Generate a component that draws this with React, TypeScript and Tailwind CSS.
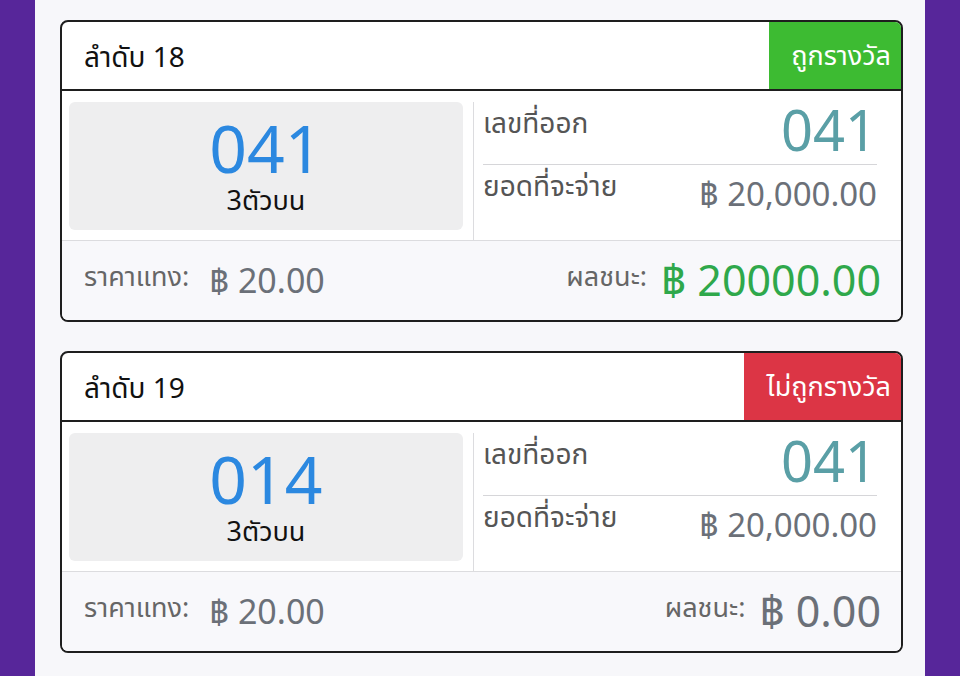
import React from "react";

type Ticket = {
  no: number;
  number: string;
  kind: string;
  drawn: string;
  payout: string;
  stake: string;
  result: string;
  won: boolean;
};

const tickets: Ticket[] = [
  { no: 18, number: "041", kind: "3ตัวบน", drawn: "041", payout: "฿ 20,000.00", stake: "฿ 20.00", result: "฿ 20000.00", won: true },
  { no: 19, number: "014", kind: "3ตัวบน", drawn: "041", payout: "฿ 20,000.00", stake: "฿ 20.00", result: "฿ 0.00", won: false },
];

function TicketCard({ t }: { t: Ticket }) {
  return (
    <div className="border-2 border-[#1e1e1e] rounded-[8px] overflow-hidden bg-white">
      {/* header */}
      <div className="flex items-stretch h-[69px] border-b-2 border-[#1e1e1e]">
        <div className="flex-1 flex items-center pl-[22px] text-[28px] text-[#111]">ลำดับ {t.no}</div>
        <div
          className={
            t.won
              ? "bg-[#3dbb32] text-white text-[27px] flex items-center justify-end pr-[10px] w-[132px]"
              : "bg-[#dc3545] text-white text-[27px] flex items-center justify-end pr-[10px] w-[157px]"
          }
        >
          {t.won ? "ถูกรางวัล" : "ไม่ถูกรางวัล"}
        </div>
      </div>

      {/* body */}
      <div className="flex h-[150px] border-b border-[#dcdcdf]">
        <div className="w-[411px] pt-[11px] pl-[7px] pr-[10px] pb-[10px]">
          <div className="h-full bg-[#eeeeef] rounded-[6px] flex flex-col items-center justify-center gap-[2px]">
            <div className="text-[66px] leading-[66px] text-[#2b88e0]">{t.number}</div>
            <div className="text-[27px] leading-[36px] text-[#111]">{t.kind}</div>
          </div>
        </div>
        <div className="w-px bg-[#dcdcdf] mt-[11px]" />
        <div className="flex-1 flex flex-col pl-[9px] pr-[24px]">
          <div className="h-[74px] flex justify-between items-start border-b border-[#d6d6d9]">
            <span className="text-[28px] leading-[36px] text-[#555] mt-[13px]">เลขที่ออก</span>
            <span className="text-[56px] leading-[56px] text-[#5a9fa6] mt-[10px]">{t.drawn}</span>
          </div>
          <div className="flex-1 flex justify-between items-start">
            <span className="text-[28px] leading-[36px] text-[#555] mt-[2px]">ยอดที่จะจ่าย</span>
            <span className="text-[33px] leading-[40px] text-[#6b7078] mt-[9px]">{t.payout}</span>
          </div>
        </div>
      </div>

      {/* footer */}
      <div className="h-[79px] bg-[#f8f8fb] flex items-center justify-between pl-[22px] pr-[20px]">
        <div className="flex items-center gap-[20px]">
          <span className="text-[27px] text-[#666] -mt-[8px]">ราคาแทง:</span>
          <span className="text-[34px] text-[#6b7078]">{t.stake}</span>
        </div>
        <div className="flex items-center gap-[14px]">
          <span className="text-[27px] text-[#666] -mt-[8px]">ผลชนะ:</span>
          <span className={t.won ? "text-[43px] text-[#2fa84b]" : "text-[43px] text-[#6b7078]"}>{t.result}</span>
        </div>
      </div>
    </div>
  );
}

export default function App() {
  return (
    <div
      className="w-[960px] h-[676px] overflow-hidden bg-[#57269a] flex"
      style={{ fontFamily: '"Noto Sans", "Noto Sans Thai", sans-serif' }}
    >
      <div className="ml-[35px] w-[890px] h-full bg-[#f7f7fa] pt-[20px] pl-[25px] pr-[22px] flex flex-col gap-[29px]">
        {tickets.map((t) => (
          <TicketCard key={t.no} t={t} />
        ))}
      </div>
    </div>
  );
}
